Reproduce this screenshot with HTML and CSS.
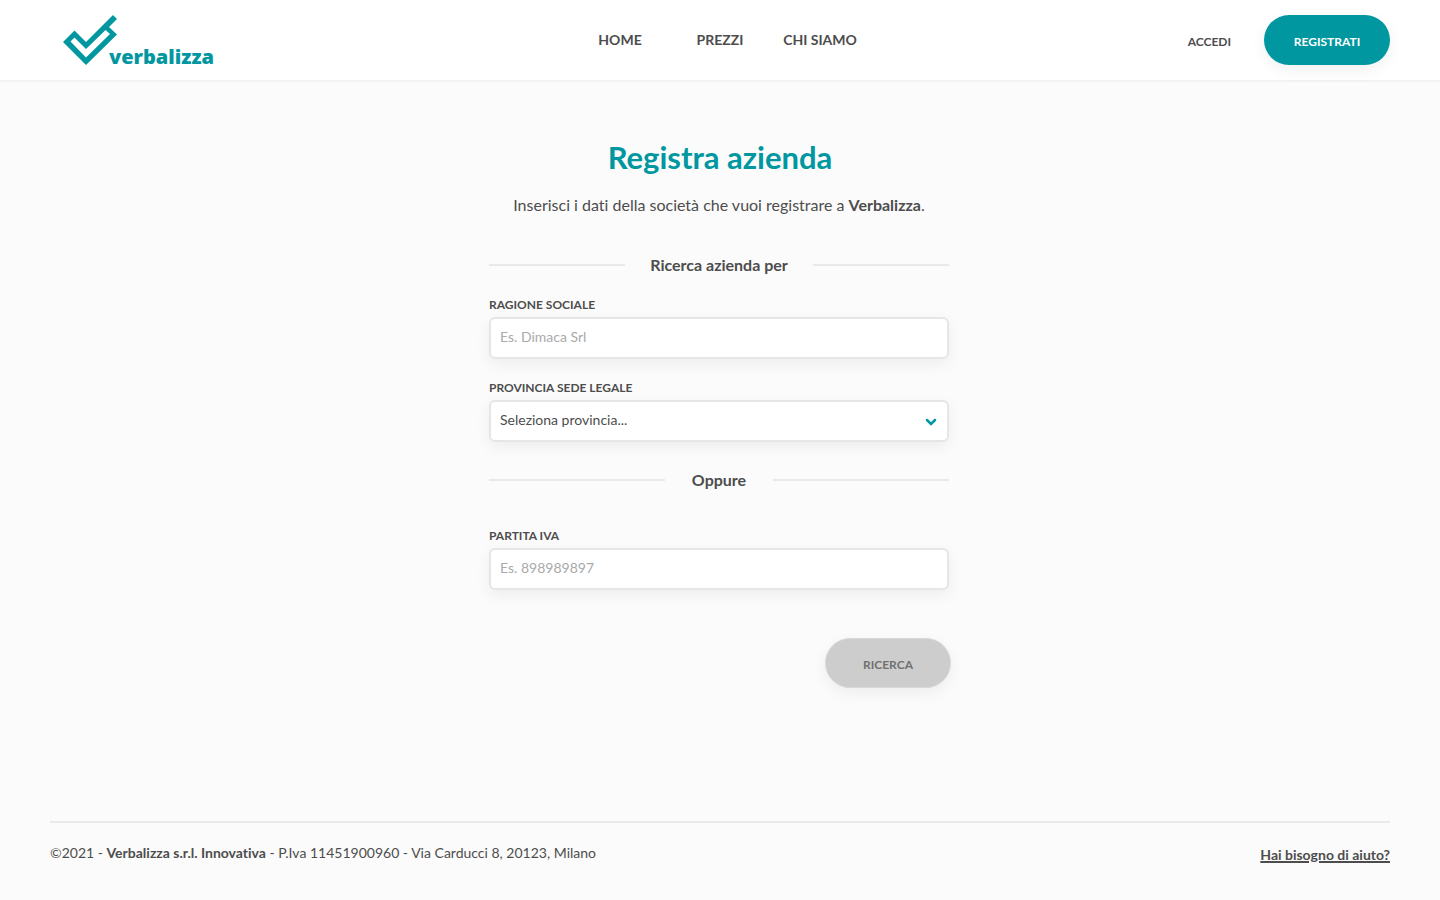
FILE: index.html
```html
<!DOCTYPE html>
<html lang="it">
<head>
<meta charset="utf-8">
<meta name="viewport" content="width=device-width, initial-scale=1">
<title>Registra azienda - Verbalizza</title>
<link rel="stylesheet" href="styles.css">
</head>
<body>
<header class="header">
  <a class="logo" href="#" aria-label="verbalizza">
    <svg class="logo-mark" viewBox="0 0 54 52" width="54" height="52" aria-hidden="true">
      <path fill="currentColor" fill-rule="evenodd" d="M0 28 11.500 16.500 23 28 50 1 54 5 46 13 54 20.500 23 51ZM7.500 27.500 23 43.500 47 20 42.500 16 23 35 11.500 23.500Z"/>
    </svg>
    <span class="logo-text">verbalizza</span>
  </a>
  <nav class="nav">
    <a href="#">HOME</a>
    <a href="#">PREZZI</a>
    <a href="#">CHI SIAMO</a>
  </nav>
  <div class="account">
    <a class="login" href="#">ACCEDI</a>
    <button class="button button-primary" type="button">REGISTRATI</button>
  </div>
</header>
<main class="main">
  <h1 class="title">Registra azienda</h1>
  <p class="intro">Inserisci i dati della società che vuoi registrare a <strong>Verbalizza</strong>.</p>
  <form class="form">
    <h2 class="divider">Ricerca azienda per</h2>
    <div class="field">
      <label for="company">RAGIONE SOCIALE</label>
      <input class="control" id="company" type="text" placeholder="Es. Dimaca Srl">
    </div>
    <div class="field">
      <label for="province">PROVINCIA SEDE LEGALE</label>
      <div class="select">
        <select class="control" id="province"><option>Seleziona provincia...</option></select>
        <svg class="chevron" viewBox="0 0 12 8" width="12" height="8" aria-hidden="true"><path d="M2 2 6 6 10 2" fill="none" stroke="currentColor" stroke-width="2.500" stroke-linecap="round"/></svg>
      </div>
    </div>
    <h2 class="divider divider-or">Oppure</h2>
    <div class="field">
      <label for="vat">PARTITA IVA</label>
      <input class="control" id="vat" type="text" placeholder="Es. 898989897">
    </div>
    <button class="button button-search" type="submit" disabled>RICERCA</button>
  </form>
</main>
<footer class="footer">
  <p class="legal">©2021 - <strong>Verbalizza s.r.l. Innovativa</strong> - P.Iva 11451900960 - Via Carducci 8, 20123, Milano</p>
  <a class="help" href="#">Hai bisogno di aiuto?</a>
</footer>
</body>
</html>
```
FILE: styles.css
```css
* { box-sizing: border-box; }

body {
  margin: 0;
  min-height: 100vh;
  display: flex;
  flex-direction: column;
  background: #fbfbfb;
  color: #4d4d4d;
  font-family: Lato, "Liberation Sans", sans-serif;
  font-size: 16px;
  font-variant-ligatures: none;
}

a { color: inherit; text-decoration: none; }
h1, h2, p { margin: 0; }

.header {
  display: grid;
  grid-template-columns: 1fr auto 1fr;
  align-items: center;
  height: 82px;
  padding: 0 50px;
  background: #fff;
  border-bottom: 2px solid #f2f2f2;
}

.logo {
  display: flex;
  align-items: flex-end;
  width: max-content;
  padding-left: 13px;
  color: #0097a0;
}
.logo-mark { display: block; }
.logo-text {
  margin-left: -8px;
  font: 800 20px/18px "Open Sans", "Noto Sans", sans-serif;
}

.nav { display: flex; }
.nav a {
  width: 100px;
  text-align: center;
  font-size: 14px;
  line-height: 20px;
  font-weight: 700;
}

.account {
  display: flex;
  justify-content: flex-end;
  align-items: center;
  gap: 33px;
  font-size: 12px;
  font-weight: 700;
}
.login { padding-top: 3px; }

.button {
  width: 126px;
  height: 50px;
  padding: 3px 0 0;
  border: 0;
  border-radius: 25px;
  font: 700 12px/16px Lato, "Liberation Sans", sans-serif;
  box-shadow: 0 5px 15px rgba(0, 0, 0, 0.06);
}
.button-primary { background: #0097a0; color: #fff; }

.main {
  flex: 1;
  width: 100%;
  max-width: 462px;
  margin: 0 auto;
  padding-top: 55px;
  text-align: center;
}
.title {
  color: #0097a0;
  font-size: 31px;
  line-height: 40px;
  font-weight: 700;
}
.intro { margin-top: 16px; padding-right: 2px; line-height: 24px; }

.form {
  display: flex;
  flex-direction: column;
  margin-top: 36px;
  padding-right: 2px;
  text-align: left;
}
.divider {
  display: flex;
  align-items: center;
  gap: 25px;
  font-size: 16px;
  line-height: 24px;
  font-weight: 700;
}
.divider::before,
.divider::after {
  content: "";
  flex: 1;
  height: 2px;
  background: #e9e9e9;
}
.divider-or { gap: 27px; margin: 26px 0 16px; }

.field { margin-top: 20px; }
.field + .field { margin-top: 21px; }
.field label {
  display: block;
  padding-bottom: 4px;
  font-size: 12px;
  line-height: 16px;
  font-weight: 700;
}
.control {
  display: block;
  width: 100%;
  height: 42px;
  padding: 0 9px 3px;
  border: 2px solid #e6e6e6;
  border-radius: 6px;
  background: #fff;
  color: #4d4d4d;
  font: 400 14px/20px Lato, "Liberation Sans", sans-serif;
  box-shadow: 0 5px 15px rgba(0, 0, 0, 0.06);
  appearance: none;
}
.control::placeholder { color: #aaa; opacity: 1; }
.select { position: relative; }
.chevron {
  position: absolute;
  right: 12px;
  top: 18px;
  color: #0097a0;
  pointer-events: none;
}
.button-search {
  align-self: flex-end;
  margin: 48px -2px 0 0;
  border: 1px solid #d8d8d8;
  background: #cdcdcd;
  color: #707070;
}

.footer {
  display: flex;
  justify-content: space-between;
  margin: 0 50px;
  padding: 20px 0 35px;
  border-top: 2px solid #e9e9e9;
  font-size: 14px;
  line-height: 20px;
}
.help {
  padding-top: 2px;
  font-weight: 700;
  text-decoration: underline;
  text-decoration-thickness: 2px;
}
```
